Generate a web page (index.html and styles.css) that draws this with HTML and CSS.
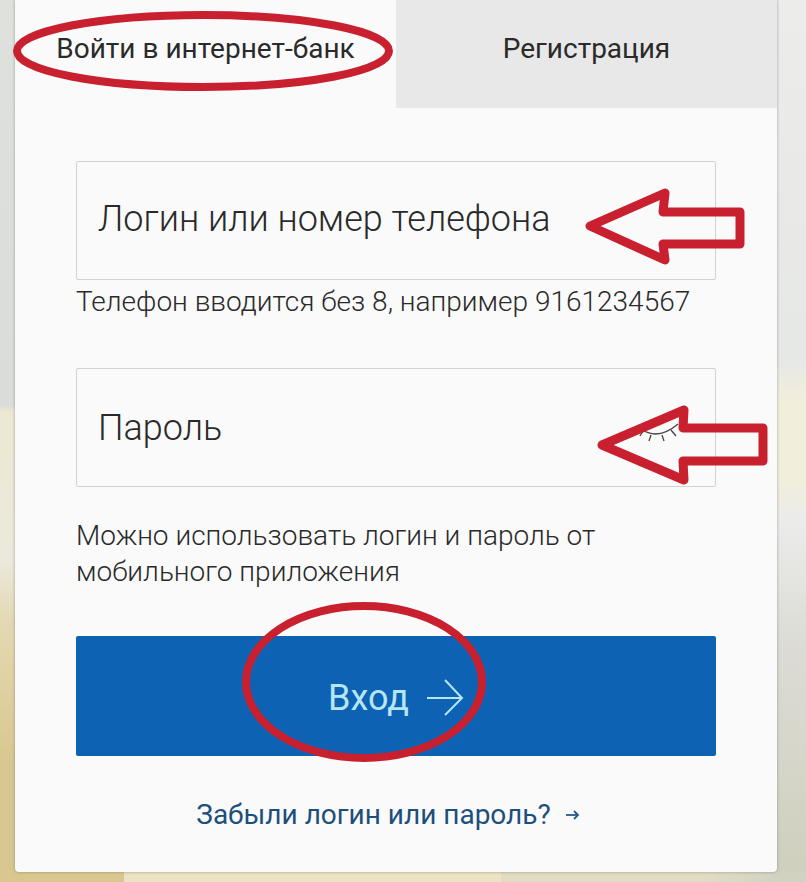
FILE: index.html
```html
<!DOCTYPE html>
<html lang="ru">
<head>
<meta charset="utf-8">
<title>Вход в интернет-банк</title>
<link rel="stylesheet" href="styles.css">
</head>
<body>
<div class="floor"></div>
<main class="card">
  <nav class="tabs">
    <div class="tab tab-active">Войти в интернет-банк</div>
    <div class="tab tab-muted">Регистрация</div>
  </nav>
  <form class="form">
    <div class="field">Логин или номер телефона</div>
    <p class="hint hint-phone">Телефон вводится без 8, например 9161234567</p>
    <div class="field field-password">Пароль
      <svg class="eye" viewBox="0 0 44 24" width="44" height="24" fill="none" stroke="#444" stroke-width="1.3">
        <path d="M3 8 Q20 20 40 3"/><path d="M5 10 L2 15"/><path d="M13 14 L11 20"/><path d="M24 14 L26 20"/><path d="M33 9 L38 15"/>
      </svg>
    </div>
    <p class="hint hint-mobile">Можно использовать логин и пароль от<br>мобильного приложения</p>
    <div class="button">Вход
      <svg class="button-arrow" viewBox="0 0 38 38" width="38" height="38" fill="none" stroke="#b5e6f5" stroke-width="2">
        <path d="M1 19 H36"/><path d="M19 1 L36 19 L19 36"/>
      </svg>
    </div>
    <a class="forgot">Забыли логин или пароль?
      <svg class="forgot-arrow" viewBox="0 0 14 12" width="14" height="12" fill="none" stroke="#2a5a8c" stroke-width="1.8">
        <path d="M0 6 H12"/><path d="M8 2 L12 6 L8 10"/>
      </svg>
    </a>
  </form>
</main>
<svg class="marks" viewBox="0 0 806 882" width="806" height="882" fill="none" stroke="#c8202f">
  <ellipse cx="203" cy="51" rx="186" ry="36" stroke-width="8"/>
  <ellipse cx="364" cy="682" rx="118" ry="76" stroke-width="8"/>
  <path d="M590 226 L665 193 L663 212 L740 212 L740 244 L663 244 L665 260 Z" stroke-width="9" stroke-linejoin="round"/>
  <path d="M602 445 L684 410 L683 428 L763 428 L763 461 L683 461 L684 480 Z" stroke-width="9" stroke-linejoin="round"/>
</svg>
</body>
</html>
```
FILE: styles.css
```css
html, body {
  margin: 0;
  padding: 0;
}
body {
  position: relative;
  width: 806px;
  height: 882px;
  overflow: hidden;
  font-family: Roboto, "Liberation Sans", sans-serif;
  background-color: #e8e8e6;
  background-image:
    linear-gradient(180deg, #dfe1dd 0, #d9dcd9 405px, #ece8d2 412px, #ece9dc 560px, #e4d9b4 620px, #d8c88f 760px, #d8c88f 882px),
    linear-gradient(180deg, #ececea 0, #e6e8e6 360px, #f2eedc 400px, #f1eedc 480px, #ebebea 520px, #dcdcd6 640px, #cfcfbd 882px);
  background-size: 403px 100%, 403px 100%;
  background-position: left top, right top;
  background-repeat: no-repeat;
}
.floor {
  position: absolute;
  left: 0;
  right: 0;
  bottom: 0;
  height: 10px;
  background: linear-gradient(90deg, #d8c88f 0 124px, #ece3c4 124px 501px, #e2dcc2 501px 700px, #d2d2c2 780px);
}
.card {
  position: relative;
  width: 762px;
  height: 872px;
  margin-left: 15px;
  background: #fafafa;
  border-radius: 0 0 4px 4px;
  box-shadow: 0 0 3px rgba(90, 90, 90, 0.55);
}
.tabs {
  display: flex;
  height: 108px;
}
.tab {
  display: flex;
  align-items: center;
  justify-content: center;
  font-size: 28px;
  color: #2a2a2a;
  padding-bottom: 12px;
  box-sizing: border-box;
}
.tab-active {
  width: 381px;
}
.tab-muted {
  flex: 1;
  background: #e8e8e8;
}
.form {
  display: flex;
  flex-direction: column;
  padding: 53px 61px 0;
}
.field {
  position: relative;
  height: 119px;
  box-sizing: border-box;
  border: 1px solid #d2d2d2;
  border-radius: 2px;
  padding: 36px 21px 0;
  font-size: 36px;
  font-weight: 300;
  line-height: 42px;
  color: #2a2a2a;
}
.field-password {
  padding-top: 38px;
}
.eye {
  position: absolute;
  right: 33px;
  top: 52px;
}
.hint {
  margin: 0;
  font-size: 28px;
  font-weight: 300;
  line-height: 36px;
  color: #2a2a2a;
}
.hint-phone {
  padding: 4px 0 48px;
}
.hint-mobile {
  padding: 31px 0 46px;
}
.button {
  display: flex;
  align-items: center;
  justify-content: center;
  gap: 17px;
  height: 120px;
  box-sizing: border-box;
  padding-top: 3px;
  background: #0d62b3;
  border-radius: 2px;
  font-size: 36px;
  font-weight: 400;
  color: #b5e6f5;
}
.forgot {
  display: flex;
  align-items: center;
  justify-content: center;
  gap: 15px;
  margin-top: 41px;
  padding-right: 16px;
  font-size: 28px;
  line-height: 36px;
  font-weight: 400;
  color: #1d4f7c;
}
.marks {
  position: absolute;
  left: 0;
  top: 0;
}
```
